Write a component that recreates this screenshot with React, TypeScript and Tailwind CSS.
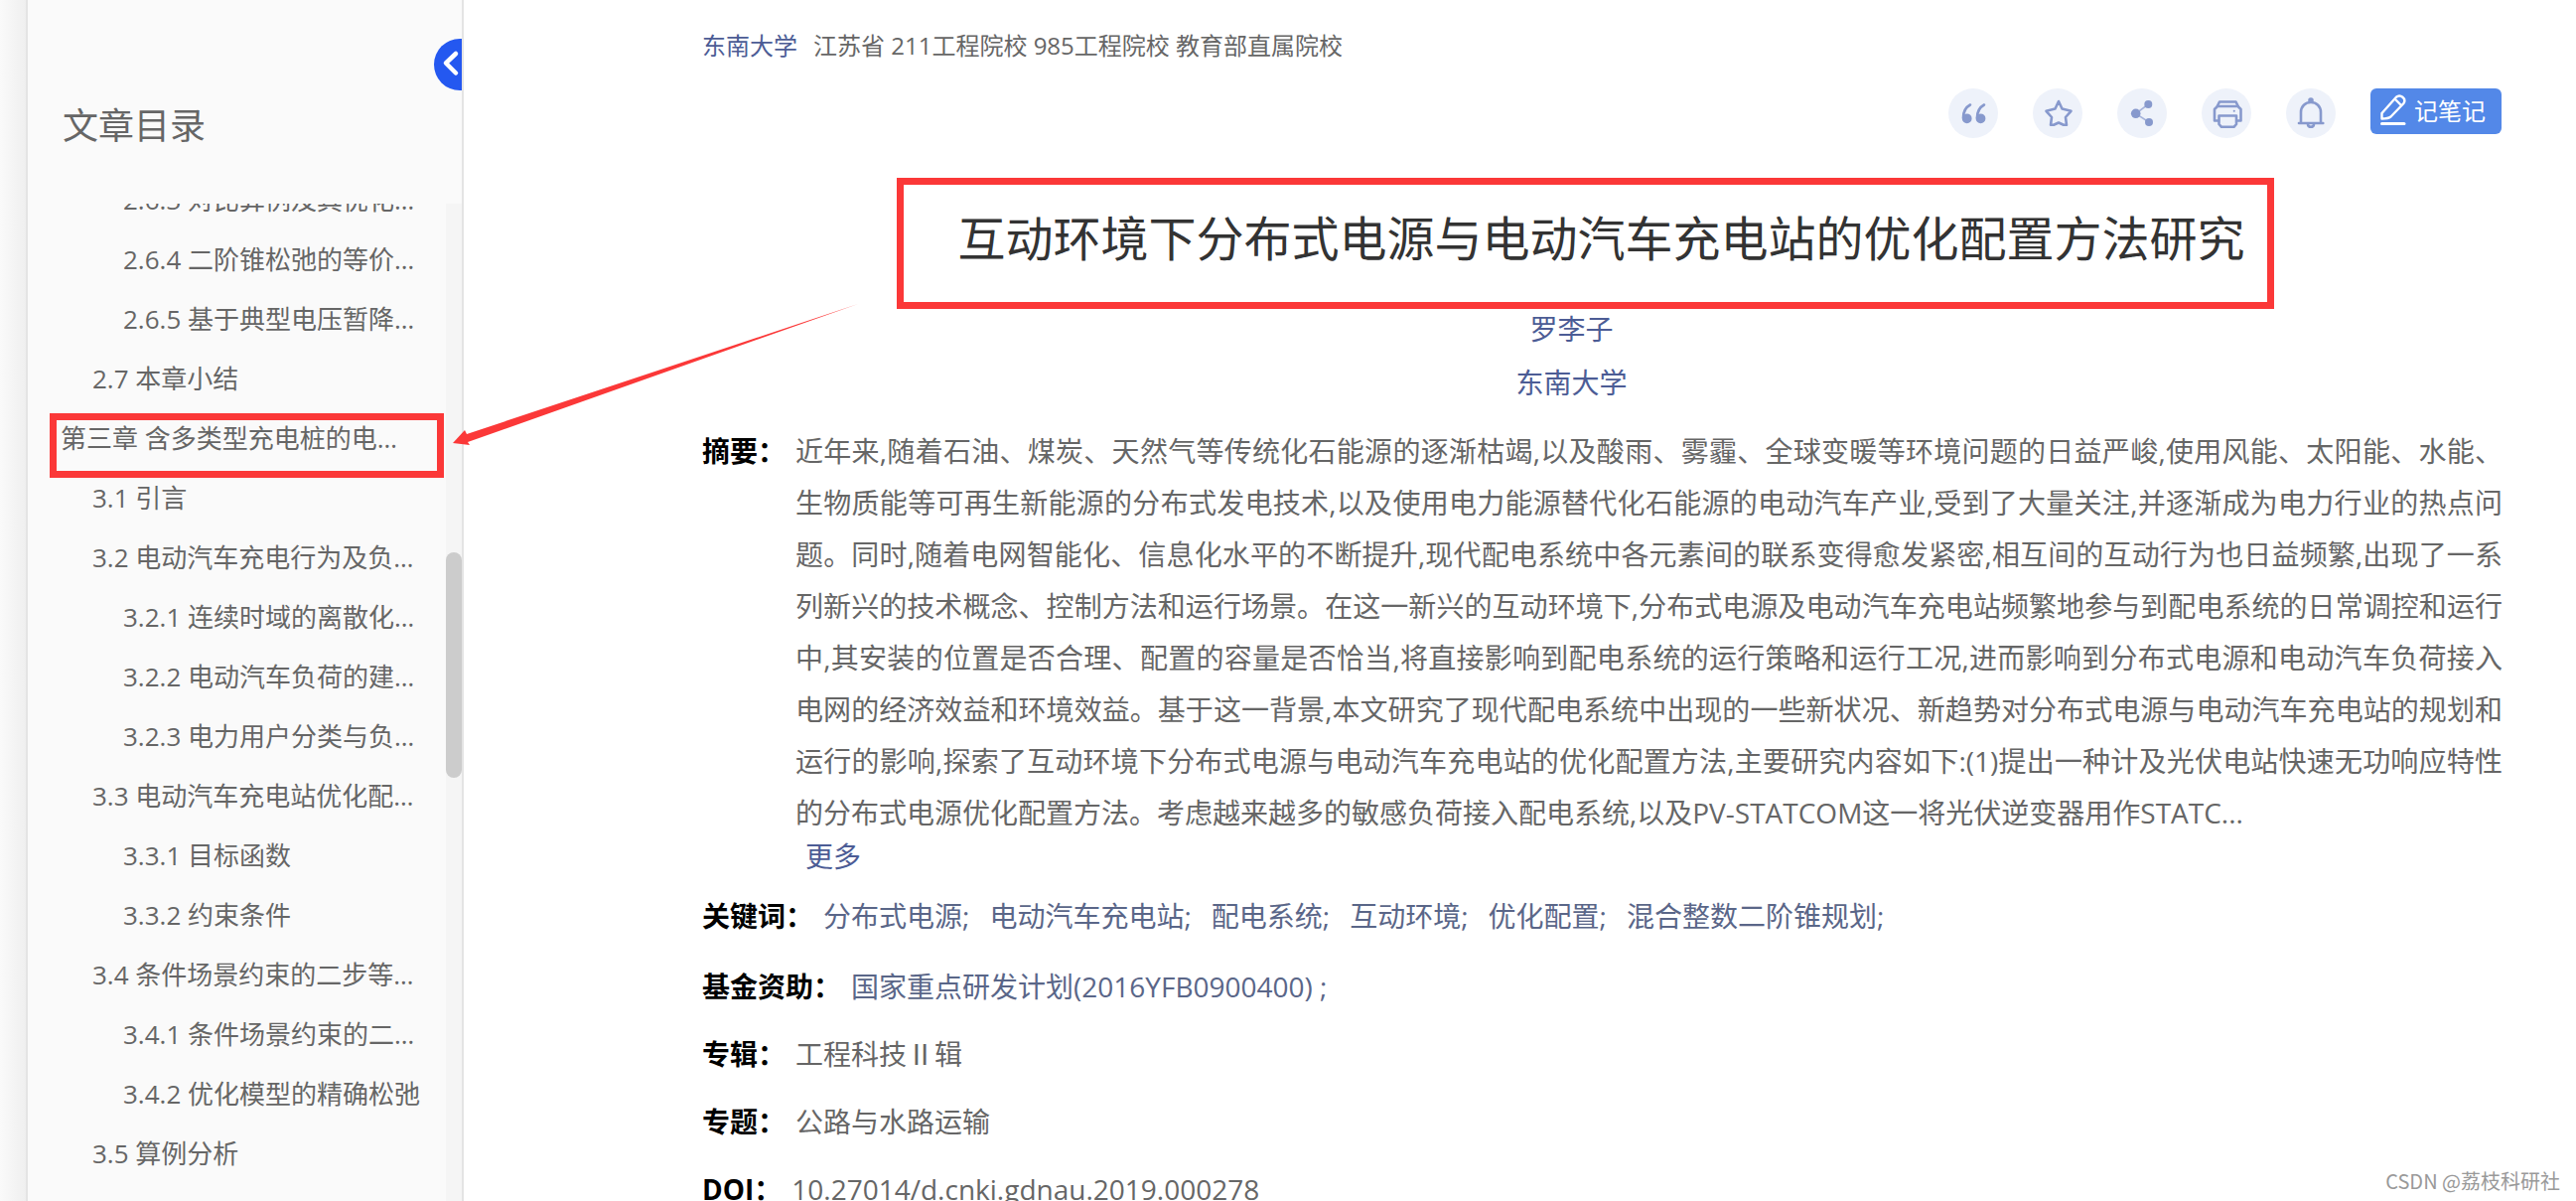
import React from 'react';

const toc = [
  { level: 3, text: '2.6.3 对比算例及其优化…' },
  { level: 3, text: '2.6.4 二阶锥松弛的等价…' },
  { level: 3, text: '2.6.5 基于典型电压暂降…' },
  { level: 2, text: '2.7 本章小结' },
  { level: 1, text: '第三章 含多类型充电桩的电…', marked: true },
  { level: 2, text: '3.1 引言' },
  { level: 2, text: '3.2 电动汽车充电行为及负…' },
  { level: 3, text: '3.2.1 连续时域的离散化…' },
  { level: 3, text: '3.2.2 电动汽车负荷的建…' },
  { level: 3, text: '3.2.3 电力用户分类与负…' },
  { level: 2, text: '3.3 电动汽车充电站优化配…' },
  { level: 3, text: '3.3.1 目标函数' },
  { level: 3, text: '3.3.2 约束条件' },
  { level: 2, text: '3.4 条件场景约束的二步等…' },
  { level: 3, text: '3.4.1 条件场景约束的二…' },
  { level: 3, text: '3.4.2 优化模型的精确松弛' },
  { level: 2, text: '3.5 算例分析' },
];

const indent: Record<number, string> = {
  1: 'pl-[33px]',
  2: 'pl-[65px]',
  3: 'pl-[96px]',
};

const keywords = ['分布式电源', '电动汽车充电站', '配电系统', '互动环境', '优化配置', '混合整数二阶锥规划'];

const abstractText =
  '近年来,随着石油、煤炭、天然气等传统化石能源的逐渐枯竭,以及酸雨、雾霾、全球变暖等环境问题的日益严峻,使用风能、太阳能、水能、生物质能等可再生新能源的分布式发电技术,以及使用电力能源替代化石能源的电动汽车产业,受到了大量关注,并逐渐成为电力行业的热点问题。同时,随着电网智能化、信息化水平的不断提升,现代配电系统中各元素间的联系变得愈发紧密,相互间的互动行为也日益频繁,出现了一系列新兴的技术概念、控制方法和运行场景。在这一新兴的互动环境下,分布式电源及电动汽车充电站频繁地参与到配电系统的日常调控和运行中,其安装的位置是否合理、配置的容量是否恰当,将直接影响到配电系统的运行策略和运行工况,进而影响到分布式电源和电动汽车负荷接入电网的经济效益和环境效益。基于这一背景,本文研究了现代配电系统中出现的一些新状况、新趋势对分布式电源与电动汽车充电站的规划和运行的影响,探索了互动环境下分布式电源与电动汽车充电站的优化配置方法,主要研究内容如下:(1)提出一种计及光伏电站快速无功响应特性的分布式电源优化配置方法。考虑越来越多的敏感负荷接入配电系统,以及PV-STATCOM这一将光伏逆变器用作STATC...';

const icon = {
  viewBox: '0 0 50 50',
  className: 'size-full',
  fill: 'none',
  stroke: 'currentColor',
  strokeWidth: 2.6,
  strokeLinecap: 'round' as const,
  strokeLinejoin: 'round' as const,
};

function QuoteIcon() {
  return (
    <svg {...icon}>
      <path d="M22 16.500c-4.500 2.500-7 7.500-7 13" />
      <path d="M36 16.500c-4.500 2.500-7 7.500-7 13" />
      <circle cx="18.700" cy="30.300" r="3.600" fill="currentColor" />
      <circle cx="32.500" cy="30.300" r="3.600" fill="currentColor" />
    </svg>
  );
}

function StarIcon() {
  return (
    <svg {...icon}>
      <path d="M26 13 29.500 20.500 38.500 22.800 33 29 34 36.800H31L26 34.500 21 36.800H18L19 29 13.500 22.800 22.500 20.500Z" />
    </svg>
  );
}

function ShareIcon() {
  return (
    <svg {...icon}>
      <path d="M31.300 16 18.700 25.300 32 34" strokeWidth="1.600" opacity="0.7" />
      <g fill="currentColor" stroke="none">
        <circle cx="31.300" cy="16" r="4" />
        <circle cx="18.700" cy="25.300" r="4.800" />
        <circle cx="32" cy="34" r="4" />
      </g>
    </svg>
  );
}

function PrintIcon() {
  return (
    <svg {...icon}>
      <path d="M16 17.500 18 13.500H34.500L36.500 17.500" />
      <path d="M17 32.500H13V21L16 18H36.500L39.500 21V32.500H35.500" />
      <path d="M17.500 27.500H35V36L32.500 38.800H20L17.500 36Z" />
      <path d="M32.700 22.700h.1" strokeWidth="2" />
    </svg>
  );
}

function BellIcon() {
  return (
    <svg {...icon}>
      <circle cx="25" cy="12" r="1.500" fill="currentColor" />
      <path d="M15 33.500V24c0-6 4.500-10 10-10s10 4 10 10v9.500" />
      <path d="M13 35h24.300" />
      <path d="M22 36.500c.5 3 5.500 3 6 0" />
    </svg>
  );
}

const tools = [
  { label: '引用', Icon: QuoteIcon },
  { label: '收藏', Icon: StarIcon },
  { label: '分享', Icon: ShareIcon },
  { label: '打印', Icon: PrintIcon },
  { label: '关注', Icon: BellIcon },
];

function Sidebar() {
  return (
    <aside className="relative flex w-[441px] shrink-0 flex-col border-x-2 border-[#e4e4e4] bg-[#fafafa] text-[#666]">
      <button
        type="button"
        aria-label="收起目录"
        className="absolute right-0 top-[39px] h-[52px] w-7 rounded-l-full bg-[#2458f0] text-white"
      >
        <svg viewBox="0 0 28 52" className="size-full" fill="none" stroke="currentColor" strokeWidth="4.500" strokeLinecap="round" strokeLinejoin="round">
          <path d="M22 15 12 24.500 22 34.500" />
        </svg>
      </button>
      <h2 className="px-[35px] pb-[52px] pt-[101px] text-[36px] leading-[52px]">文章目录</h2>
      <div className="flex min-h-0 flex-1">
        <nav className="min-w-0 flex-1 overflow-hidden">
          <ul className="-mt-[34px]">
            {toc.map((item) => (
              <li key={item.text} className="relative">
                <a href="#" className={`block whitespace-nowrap text-[26px] leading-[60px] ${indent[item.level]}`}>
                  {item.text}
                </a>
                {item.marked && (
                  <span className="absolute left-[22px] right-[2px] top-[5px] h-[65px] border-[7px] border-[#fb3838]" />
                )}
              </li>
            ))}
          </ul>
        </nav>
        <div className="w-4 bg-[#f5f5f5]">
          <div className="h-[35%]" />
          <div className="h-[227px] rounded-full bg-[#ccc]" />
        </div>
      </div>
    </aside>
  );
}

function Row({ label, children }: { label: string; children: React.ReactNode }) {
  return (
    <div className="flex text-[28px] leading-10">
      <dt className="shrink-0 font-bold text-black">{label}</dt>
      <dd className="ml-[10px]">{children}</dd>
    </div>
  );
}

function Article() {
  return (
    <main className="min-w-0 flex-1 bg-white pl-[240px] pr-[74px] pt-[26px] text-[#666]">
      <p className="flex gap-4 text-2xl leading-10">
        <a href="#" className="text-[#4c5c95]">东南大学</a>
        <span>江苏省 211工程院校 985工程院校 教育部直属院校</span>
      </p>

      <div className="mt-[23px] flex items-start justify-end gap-[35px] pr-px">
        {tools.map(({ label, Icon }) => (
          <button key={label} type="button" aria-label={label} className="size-[50px] rounded-full bg-[#eef2fa] text-[#8799cd]">
            <Icon />
          </button>
        ))}
        <button type="button" className="flex h-[46px] w-[132px] items-center gap-[7px] rounded-md bg-[#5388e8] pl-[9px] text-2xl text-white">
          <svg viewBox="0 0 28 36" className="h-9 w-7" fill="none" stroke="currentColor" strokeWidth="2.400" strokeLinecap="round" strokeLinejoin="round">
            <path d="M2.500 25.500V20L17 3.800C21 .5 27.500 5 24.500 10L11.500 23.500C9 25.500 6 25.500 2.500 25.500Z" />
            <path d="M16.500 6.500 21.500 11.500" />
            <path d="M2.500 30.500h22.500" strokeWidth="3" />
          </svg>
          记笔记
        </button>
      </div>

      <div className="mt-10 flex justify-center pr-[34px]">
        <h1 className="border-[7px] border-[#fb3838] pb-7 pl-[54px] pr-[22px] pt-[18px] text-5xl leading-[72px] text-[#333]">
          互动环境下分布式电源与电动汽车充电站的优化配置方法研究
        </h1>
      </div>

      <div className="-mt-[7px] flex flex-col items-center pr-[62px] text-[28px] leading-[54px] text-[#4c5c95]">
        <a href="#">罗李子</a>
        <a href="#">东南大学</a>
      </div>

      <dl className="mt-4">
        <div className="flex text-[28px] leading-[52px]">
          <dt className="shrink-0 font-bold text-black">摘要：</dt>
          <dd className="ml-[10px] min-w-0 flex-1">
            <p className="text-justify">{abstractText}</p>
            <a href="#" className="ml-[10px] block w-fit leading-9 text-[#4c5c95]">更多</a>
          </dd>
        </div>
        <div className="mt-[22px]">
          <Row label="关键词：">
            <ul className="flex gap-5 text-[#5a6688]">
              {keywords.map((word) => (
                <li key={word}>
                  <a href="#">{word}</a>;
                </li>
              ))}
            </ul>
          </Row>
        </div>
        <div className="mt-[31px] flex flex-col gap-7">
          <Row label="基金资助：">
            <a href="#" className="text-[#5a6688]">国家重点研发计划(2016YFB0900400) ;</a>
          </Row>
          <Row label="专辑：">工程科技Ⅱ辑</Row>
          <Row label="专题：">公路与水路运输</Row>
          <Row label="DOI：">10.27014/d.cnki.gdnau.2019.000278</Row>
        </div>
      </dl>
    </main>
  );
}

export default function App() {
  return (
    <div className="relative flex h-screen overflow-hidden bg-[#f9f9f9] font-['Open_Sans','Noto_Sans_CJK_SC',sans-serif]" lang="zh-CN">
      <div className="w-[26px] shrink-0 bg-linear-to-r from-[#fafafa] to-[#efefef]" />
      <Sidebar />
      <Article />
      {/* arrow from the title to the marked chapter */}
      <svg className="absolute left-[455px] top-[305px] h-[145px] w-[412px] text-[#fb3838]" viewBox="0 0 412 145" fill="currentColor">
        <path d="M1 141 13 128 15 132 409 1 16 140 18 143Z" />
      </svg>
      <span className="absolute bottom-1.5 right-4 font-['Noto_Sans_CJK_SC',sans-serif] text-xl text-[#999]">
        CSDN @荔枝科研社
      </span>
    </div>
  );
}
